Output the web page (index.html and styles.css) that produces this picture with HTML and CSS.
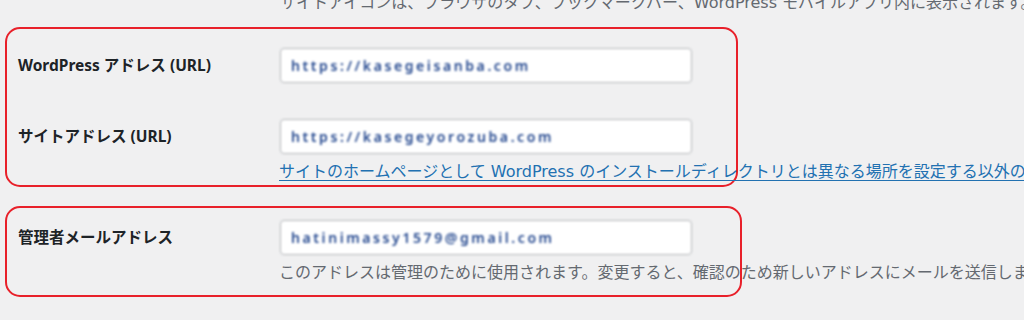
FILE: index.html
```html
<!DOCTYPE html>
<html lang="ja">
<head>
    <meta charset="UTF-8">
    <meta name="viewport" content="width=device-width, initial-scale=1.0">
    <title>一般設定</title>
    <link rel="stylesheet" href="styles.css">
</head>
<body>
    <div class="wrap">
        <p class="top-note">サイトアイコンは、ブラウザのタブ、ブックマークバー、WordPress モバイルアプリ内に表示されます。</p>

        <div class="mark-box box-url">
            <div class="row">
                <label class="label" for="siteurl">WordPress アドレス (URL)</label>
                <div class="field">
                    <input type="text" id="siteurl" class="blurred" value="https://kasegeisanba.com">
                </div>
            </div>
            <div class="row row-second">
                <label class="label" for="home">サイトアドレス (URL)</label>
                <div class="field">
                    <input type="text" id="home" class="blurred" value="https://kasegeyorozuba.com">
                    <p class="help"><a href="#">サイトのホームページとして WordPress のインストールディレクトリとは異なる場所を設定する以外の場合は、ここに WordPress アドレス (URL) を入力してください。</a></p>
                </div>
            </div>
        </div>

        <div class="mark-box box-mail">
            <div class="row">
                <label class="label" for="admin_email">管理者メールアドレス</label>
                <div class="field">
                    <input type="text" id="admin_email" class="blurred" value="hatinimassy1579@gmail.com">
                    <p class="desc">このアドレスは管理のために使用されます。変更すると、確認のため新しいアドレスにメールを送信します。</p>
                </div>
            </div>
        </div>
    </div>
</body>
</html>
```

FILE: styles.css
```css
body {
    margin: 0;
    padding: 0;
    background-color: #f0f0f1;
    color: #1d2327;
    font-family: "DejaVu Sans", "Noto Sans CJK JP", sans-serif;
    font-size: 16px;
    overflow: hidden;
}

.wrap {
    padding-left: 5px;
}

.top-note {
    margin: -7px 0 0 275px;
    line-height: 20px;
    color: #646970;
    white-space: nowrap;
}

.mark-box {
    width: 733px;
    border: 2px solid #e8202a;
    border-radius: 15px;
    box-sizing: border-box;
    padding-left: 11px;
}

.box-url {
    margin-top: 14px;
    height: 160px;
    padding-top: 19px;
}

.box-mail {
    margin-top: 19px;
    width: 737px;
    height: 91px;
    padding-top: 12px;
}

.row {
    display: grid;
    grid-template-columns: 262px 1fr;
}

.row-second {
    margin-top: 36px;
}

.label {
    font-family: "Noto Sans", "Noto Sans CJK JP", sans-serif;
    font-weight: 700;
    font-size: 15.5px;
    line-height: 35px;
    white-space: nowrap;
}

.field {
    min-width: 0;
}

input[type="text"] {
    display: block;
    width: 412px;
    height: 35px;
    box-sizing: border-box;
    margin: 0;
    padding: 0 10px;
    border: 1px solid #b4b6ba;
    border-radius: 4px;
    background-color: #fff;
    font-family: "Noto Sans", sans-serif;
    font-size: 14px;
}

.blurred {
    color: #24488f;
    filter: blur(0.8px);
    letter-spacing: 2.6px;
    font-weight: 600;
}

.help, .desc {
    margin: 8px 0 0 -1px;
    line-height: 20px;
    white-space: nowrap;
}

.help a {
    color: #2271b1;
    text-decoration: underline;
    text-underline-offset: 3px;
}

.desc {
    margin-top: 8px;
    color: #646970;
}
```
